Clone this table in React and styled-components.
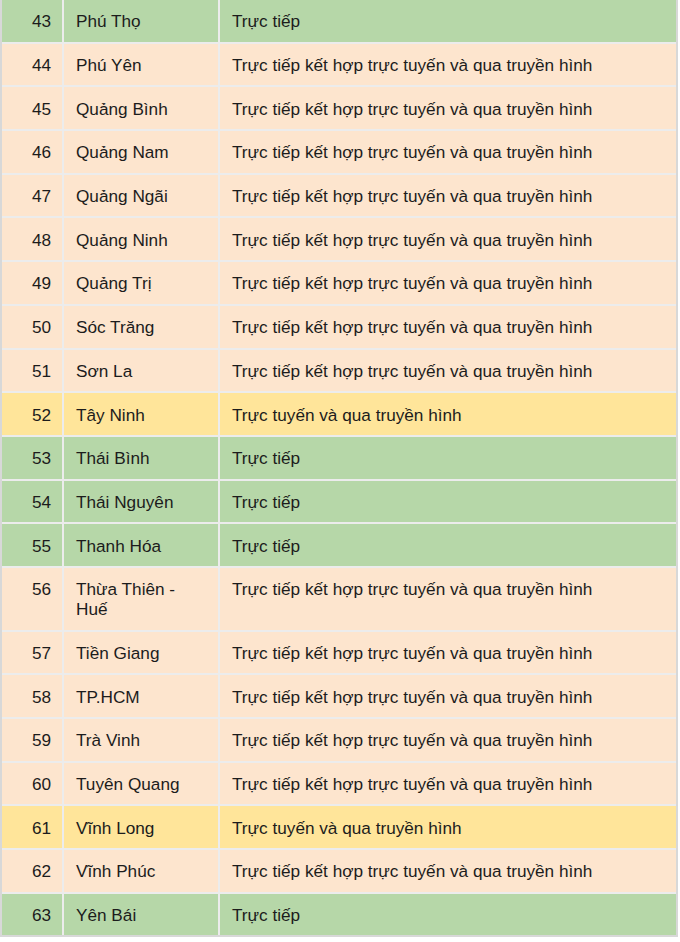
import styled, { createGlobalStyle } from 'styled-components';

const GlobalStyle = createGlobalStyle`
  body {
    margin: 0;
    background: #ffffff;
    font-family: "Liberation Sans", Arial, sans-serif;
  }
`;

const COLORS = {
  direct: '#b6d7a8',
  mixed: '#fde5ce',
  online: '#ffe59a',
};

const MIXED = 'Trực tiếp kết hợp trực tuyến và qua truyền hình';
const DIRECT = 'Trực tiếp';
const ONLINE = 'Trực tuyến và qua truyền hình';

const ROWS = [
  { id: 43, name: 'Phú Thọ', mode: 'direct' },
  { id: 44, name: 'Phú Yên', mode: 'mixed' },
  { id: 45, name: 'Quảng Bình', mode: 'mixed' },
  { id: 46, name: 'Quảng Nam', mode: 'mixed' },
  { id: 47, name: 'Quảng Ngãi', mode: 'mixed' },
  { id: 48, name: 'Quảng Ninh', mode: 'mixed' },
  { id: 49, name: 'Quảng Trị', mode: 'mixed' },
  { id: 50, name: 'Sóc Trăng', mode: 'mixed' },
  { id: 51, name: 'Sơn La', mode: 'mixed' },
  { id: 52, name: 'Tây Ninh', mode: 'online' },
  { id: 53, name: 'Thái Bình', mode: 'direct' },
  { id: 54, name: 'Thái Nguyên', mode: 'direct' },
  { id: 55, name: 'Thanh Hóa', mode: 'direct' },
  { id: 56, name: 'Thừa Thiên - Huế', mode: 'mixed' },
  { id: 57, name: 'Tiền Giang', mode: 'mixed' },
  { id: 58, name: 'TP.HCM', mode: 'mixed' },
  { id: 59, name: 'Trà Vinh', mode: 'mixed' },
  { id: 60, name: 'Tuyên Quang', mode: 'mixed' },
  { id: 61, name: 'Vĩnh Long', mode: 'online' },
  { id: 62, name: 'Vĩnh Phúc', mode: 'mixed' },
  { id: 63, name: 'Yên Bái', mode: 'direct' },
];

const LABELS = { direct: DIRECT, mixed: MIXED, online: ONLINE };

const Table = styled.div`
  width: 674px;
  border-left: 2px solid #d8d8d8;
  border-right: 2px solid #d8d8d8;
  border-bottom: 2px solid #d8d8d8;
`;

const Row = styled.div`
  display: grid;
  grid-template-columns: 62px 156px 1fr;
  background: ${(p) => COLORS[p.$mode]};
  border-bottom: 2px solid #ececec;

  &:last-child {
    border-bottom: none;
  }
`;

const Cell = styled.div`
  padding: 11.35px 12px 10.35px;
  font-size: 17.2px;
  line-height: 20px;
  color: #1c1c1c;
  text-align: ${(p) => (p.$num ? 'right' : 'left')};
  padding-right: ${(p) => (p.$num ? '11px' : '12px')};
  border-right: 2px solid #ececec;

  &:last-child {
    border-right: none;
  }
`;

export default function App() {
  return (
    <>
      <GlobalStyle />
      <Table>
        {ROWS.map((row) => (
          <Row key={row.id} $mode={row.mode}>
            <Cell $num>{row.id}</Cell>
            <Cell>{row.name}</Cell>
            <Cell>{LABELS[row.mode]}</Cell>
          </Row>
        ))}
      </Table>
    </>
  );
}
